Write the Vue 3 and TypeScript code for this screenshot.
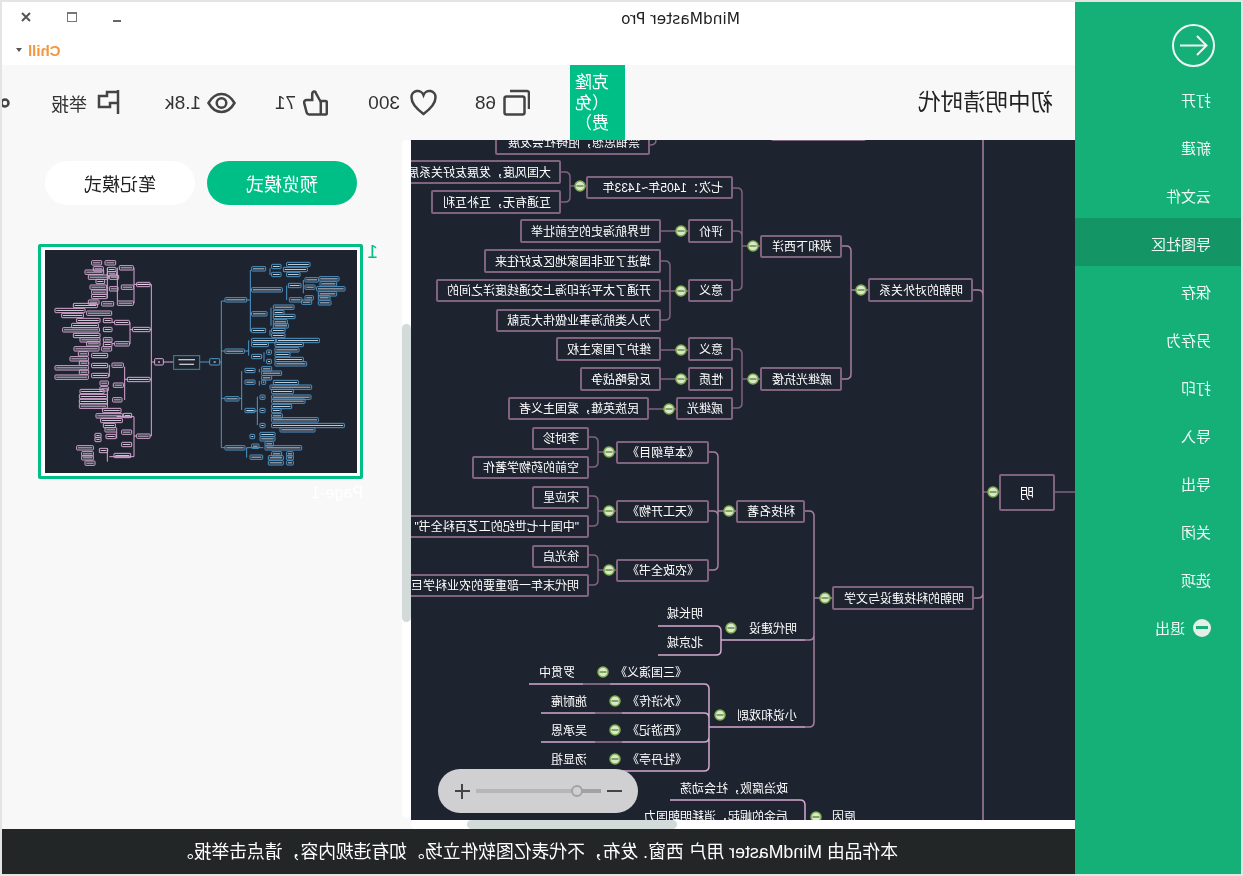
<template>
  <div class="page">
    <aside class="side">
      <svg class="back" viewBox="0 0 43 43" width="43" height="43">
        <circle cx="21.5" cy="21.5" r="20.5" />
        <path d="M35 21.5H9M18 12l-9.500 9.500L18 31" />
      </svg>
      <ul class="menu">
        <li v-for="m in menu" :key="m" :class="{ on: m === '导图社区' }">{{ m }}</li>
        <li class="quit"><span class="quit-ico"></span>退出</li>
      </ul>
    </aside>

    <main class="main">
      <div class="titlebar">
        <span class="app-name">MindMaster Pro</span>
        <div class="win-btns">
          <span class="w-min"></span>
          <span class="w-max"></span>
          <svg width="10" height="10" viewBox="0 0 10 10"><path d="M1 1l8 8M9 1l-8 8" /></svg>
        </div>
      </div>
      <div class="chillbar">
        <b>Chill</b><i class="caret"></i>
      </div>

      <header class="head">
        <h1>初中明清时代</h1>
        <div class="clone">克隆&#xFF08;免费&#xFF09;</div>
        <div class="stats">
          <div class="stat s1">
            <svg width="27" height="27" viewBox="0 0 27 27"><path d="M20 2H3a2 2 0 0 0-2 2v16" /><rect x="5.500" y="7.500" width="20" height="18" rx="2" /></svg>
            <span>68</span>
          </div>
          <div class="stat s2">
            <svg width="27" height="27" viewBox="0 0 27 27"><path d="M13.500 25C4 18 1.500 13 1.500 8.500a6.200 6.200 0 0 1 12-2.500 6.200 6.200 0 0 1 12 2.500c0 4.500-2.500 9.500-12 16.500z" /></svg>
            <span>300</span>
          </div>
          <div class="stat s3">
            <svg width="25" height="27" viewBox="0 0 25 27"><rect x="1.200" y="12" width="6" height="13.500" rx="1" /><path d="M7.200 13l5-9c0-2 3.600-2.500 3.600 1.500V11h5.500c1.800 0 3 1.500 2.500 3.200l-2.500 9.500c-.4 1.200-1.300 1.800-2.500 1.800H7.200" /></svg>
            <span>71</span>
          </div>
          <div class="stat s4">
            <svg width="29" height="22" viewBox="0 0 29 22"><path d="M1.500 11C5 5 9.500 2 14.500 2s9.500 3 13 9c-3.500 6-8 9-13 9s-9.500-3-13-9z" /><circle cx="14.500" cy="11" r="4.800" /></svg>
            <span>1.8k</span>
          </div>
          <div class="stat s5">
            <svg width="23" height="27" viewBox="0 0 23 27"><path d="M2 1v24M2 3h11v4h8v11H10v-4H2" /></svg>
            <span class="cn">举报</span>
          </div>
          <svg class="more" width="10" height="10" viewBox="0 0 10 10"><circle cx="5" cy="5" r="3.500" /></svg>
        </div>
      </header>

      <section class="body">
        <div class="map-col">
          <div class="canvas">
            <svg class="wires" width="664" height="680" viewBox="411 140 664 680">
              <path class="w-dark" :d="darkWires" />
              <path class="w-mid" :d="midWires" />
              <path class="w-light" :d="lightWires" />
              <path class="w-dim" d="M583 684h27M595 713h27M595 742h27" />
              <g v-for="(b, i) in bullets" :key="i">
                <circle class="dot" :cx="b[0]" :cy="b[1]" r="5" />
                <rect class="dash" :x="b[0] - 3.500" :y="b[1] - 1" width="7" height="2" />
              </g>
            </svg>
            <div
              v-for="(n, i) in nodes"
              :key="i"
              class="node"
              :class="n.kind"
              :style="{ left: 1075 - n.x2 + 'px', top: n.y1 - 140 + 'px', width: n.x2 - n.x1 + 'px', height: n.y2 - n.y1 + 'px' }"
            >{{ n.text }}</div>
            <div class="zoom">
              <span class="z-minus"></span>
              <div class="z-track"><span class="z-fill"></span><span class="z-thumb"></span></div>
              <span class="z-plus"></span>
            </div>
          </div>
          <div class="hbar"><span></span></div>
        </div>
        <div class="vbar"><span></span></div>

        <div class="pages">
          <div class="modes">
            <button class="active">预览模式</button>
            <button>笔记模式</button>
          </div>
          <div class="page-row">
            <span class="page-no">1</span>
            <div class="page-card">
              <div class="thumb">
                <svg width="312" height="223" viewBox="75 45 936 669">
                  <path class="t-pink" :d="pinkLines" />
                  <path class="t-blue" :d="blueLines" />
                  <g v-for="(r, i) in pinkBoxes" :key="'p' + i">
                    <rect class="t-pink" :x="r[0]" :y="r[1]" :width="r[2]" height="13" rx="2" />
                    <rect class="t-text" :x="r[0] + 4" :y="r[1] + 5" :width="r[2] - 8" height="3" />
                  </g>
                  <g v-for="(r, i) in blueBoxes" :key="'b' + i">
                    <rect class="t-blue" :x="r[0]" :y="r[1]" :width="r[2]" height="13" rx="2" />
                    <rect class="t-text" :x="r[0] + 4" :y="r[1] + 5" :width="r[2] - 8" height="3" />
                  </g>
                  <rect class="t-root" x="461" y="362" width="78" height="41" />
                  <rect class="t-text" x="475" y="372" width="50" height="4" />
                  <rect class="t-text" x="478" y="386" width="44" height="4" />
                  <rect class="t-pink" x="404" y="371" width="26" height="19" rx="2" />
                  <rect class="t-blue" x="569" y="371" width="30" height="19" rx="2" />
                  <rect class="t-text" x="414" y="379" width="6" height="4" />
                  <rect class="t-text" x="581" y="379" width="6" height="4" />
                </svg>
              </div>
              <div class="page-name">Page-1</div>
            </div>
          </div>
        </div>
      </section>

      <footer class="foot">本作品由 MindMaster 用户 西窗. 发布&#xFF0C;不代表亿图软件立场。如有违规内容&#xFF0C;请点击举报。</footer>
    </main>
  </div>
</template>

<script setup lang="ts">
interface MapNode {
  x1: number
  x2: number
  y1: number
  y2: number
  text: string
  kind: string
}

const menu: string[] = ['打开', '新建', '云文件', '导图社区', '保存', '另存为', '打印', '导入', '导出', '关闭', '选项']

function box(x1: number, x2: number, y1: number, y2: number, text: string, kind = 'box'): MapNode {
  return { x1, x2, y1, y2, text, kind }
}
// 无边框的文字节点,xEnd 是文字的起始一侧
function plain(xEnd: number, yc: number, text: string): MapNode {
  return box(xEnd - 160, xEnd, yc - 9, yc + 9, text, 'plain')
}

const nodes: MapNode[] = [
  box(495, 650, 120, 155, '禁锢思想\uFF0C阻碍社会发展', 'box bottom'),
  box(771, 866, 110, 141, '', 'box'),
  box(397, 561, 160, 184, '大国风度\uFF0C发展友好关系展现'),
  box(431, 561, 190, 214, '互通有无\uFF0C互补互利'),
  box(586, 733, 176, 199, '七次\uFF1A1405年~1433年', 'box'),
  box(520, 661, 219, 243, '世界航海史的空前壮举'),
  box(688, 733, 219, 243, '评价'),
  box(484, 661, 249, 273, '增进了亚非国家地区友好往来'),
  box(436, 661, 279, 302, '开通了太平洋印海上交通线度洋之间的'),
  box(496, 661, 309, 332, '为人类航海事业做伟大贡献'),
  box(688, 733, 279, 302, '意义'),
  box(760, 842, 235, 258, '郑和下西洋'),
  box(868, 973, 278, 302, '明朝的对外关系'),
  box(556, 661, 337, 361, '维护了国家主权'),
  box(688, 733, 337, 361, '意义'),
  box(580, 661, 367, 391, '反侵略战争'),
  box(688, 733, 367, 391, '性质'),
  box(508, 649, 397, 420, '民族英雄\uFF0C爱国主义者'),
  box(676, 733, 397, 420, '戚继光'),
  box(760, 842, 367, 391, '戚继光抗倭'),
  box(532, 589, 427, 450, '李时珍'),
  box(472, 589, 456, 479, '空前的药物学著作'),
  box(616, 709, 441, 464, '《本草纲目》'),
  box(532, 589, 486, 509, '宋应星'),
  box(397, 589, 515, 538, '"中国十七世纪的工艺百科全书"'),
  box(616, 709, 500, 523, '《天工开物》'),
  box(532, 589, 545, 568, '徐光启'),
  box(397, 589, 574, 597, '明代末年一部重要的农业科学巨著'),
  box(616, 709, 559, 582, '《农政全书》'),
  box(736, 805, 500, 523, '科技名著'),
  box(832, 974, 586, 610, '明朝的科技建设与文学'),
  box(999, 1055, 474, 511, '明', 'box big'),
  plain(703, 613, '明长城'),
  plain(703, 642, '北京城'),
  plain(797, 628, '明代建设'),
  plain(687, 672, '《三国演义》'),
  plain(575, 672, '罗贯中'),
  plain(687, 701, '《水浒传》'),
  plain(587, 701, '施耐庵'),
  plain(687, 730, '《西游记》'),
  plain(587, 730, '吴承恩'),
  plain(687, 759, '《牡丹亭》'),
  plain(587, 759, '汤显祖'),
  plain(797, 715, '小说和戏剧'),
  plain(788, 788, '政治腐败\uFF0C社会动荡'),
  plain(788, 816, '后金的崛起\uFF0C消耗明朝国力'),
  plain(856, 816, '原因'),
]

const bullets: number[][] = [
  [580, 186], [681, 231], [681, 291], [681, 350], [681, 379], [669, 409],
  [753, 246], [753, 379], [861, 290], [993, 492], [609, 452], [609, 511],
  [609, 570], [729, 511], [825, 598], [731, 628], [603, 672], [615, 701],
  [615, 730], [615, 759], [720, 715], [816, 817],
]

// 从子节点一侧到父节点的圆角括号
function bracket(cx: number, bx: number, ys: number[], px: number, py: number): string {
  const r = 5
  const top = Math.min(...ys)
  const bot = Math.max(...ys)
  let d = `M${cx} ${top}H${bx - r}Q${bx} ${top} ${bx} ${top + r}V${bot - r}Q${bx} ${bot} ${bx - r} ${bot}H${cx}`
  ys.filter((y) => y !== top && y !== bot).forEach((y) => {
    d += `M${cx} ${y}H${bx - r}Q${bx} ${y} ${bx} ${y + r}`
  })
  return d + `M${bx} ${py}H${px}`
}

const darkWires: string = [
  bracket(561, 570, [172, 202], 586, 186),
  'M661 231H688M661 291H688M661 350H688M661 379H688M649 409H676',
  'M650 145Q656 145 656 140',
  bracket(661, 670, [261, 320], 688, 291),
  bracket(733, 742, [188, 231, 290], 760, 246),
  bracket(733, 742, [349, 408], 760, 379),
  bracket(589, 598, [437, 467], 616, 452),
  bracket(589, 598, [496, 526], 616, 511),
  bracket(589, 598, [555, 585], 616, 570),
  'M983 492H999M1055 492H1075',
].join('')

const midWires: string = [
  bracket(842, 851, [246, 379], 868, 290),
  bracket(709, 718, [452, 511, 570], 736, 511),
  bracket(805, 814, [511, 727], 832, 598),
  'M805 640H809Q814 640 814 635',
  'M983 140V820M973 290H978Q983 290 983 295M973 598H978Q983 598 983 593',
].join('')

const lightWires: string = [
  'M658 626H716Q721 626 721 631V650Q721 655 716 655H658M721 640H805',
  'M529 684H704Q709 684 709 689V766Q709 771 704 771H541',
  'M541 713H704Q709 713 709 718M541 742H704Q709 742 709 737M709 727H805',
  'M670 800H800Q805 800 805 805V820',
].join('')

const pinkBoxes: number[][] = [
  [215, 77, 30], [255, 77, 32], [220, 95, 30], [298, 92, 42], [262, 97, 26], [195, 105, 56], [262, 110, 28],
  [205, 120, 60], [268, 120, 28], [228, 133, 26], [350, 142, 40], [210, 150, 50], [304, 150, 36], [268, 155, 26],
  [215, 165, 46], [215, 178, 46], [205, 195, 32], [245, 200, 36], [292, 198, 48], [160, 205, 72], [105, 220, 90],
  [125, 235, 65], [200, 228, 75], [170, 250, 70], [250, 250, 26], [284, 256, 44], [155, 265, 80], [128, 278, 110],
  [250, 277, 26], [338, 277, 52], [160, 295, 80], [180, 308, 60], [250, 308, 26], [200, 320, 40], [284, 320, 44],
  [250, 322, 26], [162, 335, 75], [245, 335, 30], [175, 350, 30], [215, 355, 48], [150, 365, 55], [178, 378, 28],
  [276, 384, 34], [215, 385, 48], [105, 392, 100], [178, 405, 28], [215, 415, 50], [105, 420, 100], [322, 427, 68],
  [240, 438, 25], [240, 455, 25], [280, 444, 30], [180, 463, 72], [178, 478, 84], [178, 493, 84], [178, 507, 84],
  [278, 488, 28], [248, 520, 55], [228, 536, 80], [242, 550, 65], [310, 535, 25], [250, 565, 36], [255, 578, 35],
  [305, 585, 30], [258, 598, 30], [350, 597, 40], [225, 595, 18], [225, 607, 18], [305, 622, 30], [170, 632, 50],
  [238, 640, 25], [185, 650, 35], [185, 662, 35], [195, 678, 30], [282, 655, 50],
]

const blueBoxes: number[][] = [
  [695, 95, 42], [755, 88, 28], [800, 82, 70], [790, 97, 72], [755, 112, 28], [800, 112, 40], [695, 158, 92],
  [805, 145, 38], [855, 128, 40], [897, 125, 60], [855, 150, 30], [900, 140, 50], [890, 155, 85], [895, 170, 55],
  [615, 188, 65], [855, 182, 25], [895, 182, 35], [808, 188, 38], [845, 195, 30], [895, 197, 38], [695, 230, 46],
  [760, 210, 62], [760, 226, 32], [760, 238, 65], [760, 254, 42], [760, 266, 45], [695, 280, 42], [755, 280, 40],
  [755, 295, 40], [695, 310, 72], [770, 310, 128], [695, 322, 50], [765, 322, 85], [615, 342, 58], [695, 358, 30],
  [740, 345, 14], [765, 338, 72], [765, 352, 45], [740, 373, 14], [765, 367, 85], [765, 380, 95], [675, 400, 30],
  [725, 395, 30], [725, 408, 60], [675, 435, 30], [725, 435, 12], [725, 422, 30], [760, 436, 75], [750, 450, 125],
  [755, 463, 65], [615, 485, 42], [675, 520, 30], [720, 480, 15], [755, 480, 118], [755, 492, 100], [720, 520, 15],
  [755, 508, 60], [755, 520, 28], [755, 536, 32], [720, 565, 15], [755, 548, 140], [755, 565, 218], [780, 578, 105],
  [615, 632, 60], [690, 598, 14], [720, 592, 45], [720, 605, 45], [695, 627, 22], [735, 620, 25], [735, 632, 110],
  [690, 660, 38], [755, 650, 30], [800, 650, 20], [745, 662, 45], [800, 662, 20], [745, 677, 45], [800, 677, 20],
]

const pinkLines =
  'M394 148V603M350 148H394M390 284H394M390 433H394M390 603H394M404 381H394M430 381H461' +
  'M342 98V205M342 148H350M330 262V327M330 284H338M314 395V495M314 433H322M342 545V665M342 603H350' +
  'M292 98V198M262 100V190M276 262H284M276 326H284M268 390V425M262 460V510M290 545H342M290 590V610M268 665H342M262 640V680'

const blueLines =
  'M604 198V638M604 198H615M604 348H615M604 490H615M604 638H615M540 381H569M599 381H604' +
  'M691 105V290M680 195H691M691 165H695M691 236H695M691 286H695M686 316V362M673 348H686M665 408V525M658 490H665' +
  'M750 100V120M800 152V195M850 135V175M753 218V272M750 285V302M732 352V380M718 402V412M718 438V452M712 485V570M680 528H712M680 638V668M680 638H730'
</script>

<style scoped>
.page {
  width: 1243px;
  height: 876px;
  padding: 2px;
  box-sizing: border-box;
  display: flex;
  background: #e4e4e4;
  transform: scaleX(-1);
  overflow: hidden;
  font-family: "Liberation Sans", "Noto Sans CJK SC", sans-serif;
}
.side {
  width: 166px;
  flex: none;
  background: #15af78;
  color: #eef8f2;
  padding-top: 22px;
  box-sizing: border-box;
  font-size: 15px;
}
.back {
  display: block;
  margin-left: 26px;
  fill: none;
  stroke: #eef8f2;
  stroke-width: 2;
}
.menu {
  list-style: none;
  margin: 7px 0 0;
  padding: 0;
}
.menu li {
  height: 48px;
  padding: 3px 0 0 30px;
  box-sizing: border-box;
  display: flex;
  align-items: center;
}
.menu li.on {
  background: #149566;
}
.quit-ico {
  width: 18px;
  height: 18px;
  margin-right: 8px;
  border-radius: 50%;
  background: #e6eee8;
  position: relative;
}
.quit-ico::after {
  content: "";
  position: absolute;
  left: 3px;
  right: 3px;
  top: 7.500px;
  height: 3px;
  background: #15af78;
}
.main {
  flex: 1;
  min-width: 0;
  display: flex;
  flex-direction: column;
  overflow: hidden;
  background: #fff;
}
.titlebar {
  height: 33px;
  display: flex;
  align-items: center;
  padding: 0 19px 0 335px;
}
.app-name {
  font-family: "DejaVu Sans", sans-serif;
  font-size: 15.400px;
  color: #222;
}
.win-btns {
  margin-left: auto;
  display: flex;
  align-items: center;
  gap: 36px;
}
.win-btns svg {
  fill: none;
  stroke: #555;
  stroke-width: 2;
  margin-top: -3px;
}
.w-min {
  width: 8px;
  height: 2px;
  margin-top: 5px;
  background: #666;
}
.w-max {
  width: 10px;
  height: 10px;
  margin-top: -3px;
  border: 1px solid #777;
  border-top-width: 2px;
  box-sizing: border-box;
}
.chillbar {
  height: 30px;
  display: flex;
  align-items: center;
  justify-content: flex-end;
  padding-right: 14px;
}
.chillbar b {
  color: #f6953c;
  font-size: 15px;
}
.caret {
  margin-left: 6px;
  border: 3.500px solid transparent;
  border-top: 4px solid #555;
  border-bottom: 0;
}
.head {
  height: 75px;
  flex: none;
  display: flex;
  background: #f8f8f8;
  padding-left: 22px;
}
.head h1 {
  width: 428px;
  flex: none;
  margin: 0;
  font-size: 22.500px;
  font-weight: 400;
  line-height: 76px;
  color: #222;
}
.clone {
  width: 55px;
  flex: none;
  box-sizing: border-box;
  padding: 8px 3px 0 16px;
  background: #00bf86;
  color: #fff;
  font-size: 17px;
  line-height: 20.500px;
  overflow: hidden;
}
.stats {
  margin-left: 40px;
  display: flex;
  align-items: center;
  height: 75px;
  font-size: 19px;
  color: #333;
}
.stat {
  display: flex;
  align-items: center;
  gap: 7px;
}
.stat svg,
.more {
  fill: none;
  stroke: #444;
  stroke-width: 2.500;
  flex: none;
}
.s1 { width: 93px; }
.s2 { width: 109px; gap: 10px; }
.s3 { width: 92px; }
.s4 { width: 116px; gap: 6px; }
.s5 { width: 110px; gap: 10px; }
.cn { font-size: 18px; }
.body {
  flex: 1;
  min-height: 0;
  display: flex;
  background: #f8f8f8;
}
.map-col {
  width: 664px;
  flex: none;
  display: flex;
  flex-direction: column;
}
.canvas {
  height: 680px;
  flex: none;
  position: relative;
  overflow: hidden;
  background: #1e2330;
}
.wires {
  position: absolute;
  left: 0;
  top: 0;
  transform: scaleX(-1);
  fill: none;
}
.wires path {
  fill: none;
  stroke-width: 1.500;
}
.w-dark { stroke: #80637f; }
.w-mid { stroke: #a8809f; }
.w-light { stroke: #d4a9d0; }
.w-dim { stroke: #6b5a6e; }
.dot {
  fill: #dbe8c6;
  stroke: #7fae52;
  stroke-width: 1.500;
}
.dash {
  fill: #84a26c;
}
.node {
  position: absolute;
  box-sizing: border-box;
  display: flex;
  align-items: center;
  white-space: nowrap;
  color: #fff;
  font-size: 12px;
  padding: 0 0 2px 8px;
  overflow: hidden;
}
.node.box {
  border: 2px solid #80637f;
  border-radius: 2px;
}
.node.bottom {
  align-items: flex-end;
  padding-bottom: 3px;
}
.node.big {
  justify-content: center;
  padding-left: 0;
  font-size: 14px;
}
.node.plain {
  padding-left: 0;
}
.zoom {
  position: absolute;
  left: 437px;
  top: 629px;
  width: 200px;
  height: 44px;
  border-radius: 22px;
  background: #d0d0d3;
  display: flex;
  align-items: center;
  padding-left: 16px;
  box-sizing: border-box;
}
.z-minus {
  width: 15px;
  height: 2px;
  background: #444;
}
.z-track {
  width: 125px;
  height: 4px;
  margin: 0 6px;
  background: #b6b6b8;
  position: relative;
}
.z-fill {
  position: absolute;
  left: 0;
  top: 0;
  width: 24px;
  height: 4px;
  background: #a2a2a4;
}
.z-thumb {
  position: absolute;
  left: 18px;
  top: -4px;
  width: 12px;
  height: 12px;
  box-sizing: border-box;
  border: 2px solid #a2a2a4;
  border-radius: 50%;
  background: #d0d0d3;
}
.z-plus {
  width: 15px;
  height: 15px;
  background: linear-gradient(#444, #444) center / 15px 2px no-repeat, linear-gradient(#444, #444) center / 2px 15px no-repeat;
}
.hbar {
  flex: 1;
  background: #fff;
  border-radius: 0 5px 5px 0;
  display: flex;
}
.hbar span {
  width: 210px;
  margin-left: 398px;
  background: #d2dada;
  border-radius: 5px;
}
.vbar {
  width: 9px;
  height: 678px;
  margin-right: 1px;
  flex: none;
  background: #fff;
  border-radius: 5px;
  display: flex;
}
.vbar span {
  width: 9px;
  height: 298px;
  margin-top: 184px;
  background: #d2dada;
  border-radius: 5px;
}
.pages {
  flex: 1;
  padding: 21px 0 0 44px;
  box-sizing: border-box;
}
.modes {
  display: flex;
  gap: 12px;
}
.modes button {
  width: 150px;
  height: 44px;
  border: 0;
  border-radius: 22px;
  background: #fff;
  color: #222;
  font: 18px "Liberation Sans", "Noto Sans CJK SC", sans-serif;
}
.modes button.active {
  background: #00bf86;
  color: #fff;
}
.page-row {
  margin: 39px 0 0 -21px;
  display: flex;
  gap: 8px;
}
.page-no {
  width: 7px;
  margin-top: -3px;
  color: #00bf86;
  font-size: 19px;
  font-weight: 300;
}
.thumb {
  width: 325px;
  height: 235px;
  box-sizing: border-box;
  border: 3px solid #00bf86;
  border-radius: 2px;
  padding: 3px;
  background: #fff;
}
.thumb svg {
  display: block;
  background: #1e2330;
  transform: scaleX(-1);
  filter: blur(0.5px);
}
.t-pink {
  fill: none;
  stroke: #dba8d6;
  stroke-width: 3;
}
.t-blue {
  fill: none;
  stroke: #4f97c9;
  stroke-width: 3;
}
.t-root {
  fill: none;
  stroke: #37909c;
  stroke-width: 3;
}
.t-text {
  fill: #eef2f4;
  opacity: 0.8;
}
.page-name {
  margin-top: 5px;
  font-size: 16px;
  color: #fff;
}
.foot {
  height: 45px;
  flex: none;
  box-sizing: border-box;
  padding-left: 3px;
  background: #222626;
  color: #fff;
  font-size: 17.800px;
  line-height: 46px;
  text-align: center;
  white-space: nowrap;
}
</style>

<style>
html,
body {
  margin: 0;
  overflow: hidden;
}
</style>
